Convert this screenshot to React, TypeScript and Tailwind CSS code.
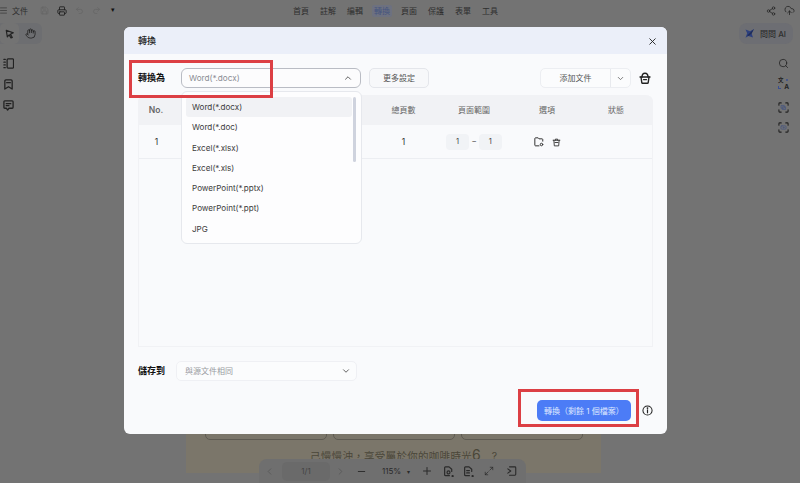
import React from "react";
import { Menu, Save, Printer, Undo2, Redo2, Hand, Search, X, ChevronUp, ChevronDown, ChevronLeft, ChevronRight, Minus, Plus, Share2, CloudUpload, Maximize2 } from "lucide-react";

const tabs = ["首頁", "註解", "編輯", "轉換", "頁面", "保護", "表單", "工具"];
const formats = ["Word(*.docx)", "Word(*.doc)", "Excel(*.xlsx)", "Excel(*.xls)", "PowerPoint(*.pptx)", "PowerPoint(*.ppt)", "JPG"];

type P = { size?: number; className?: string };
const S = ({ size = 12, className, children, sw = 1.4 }: P & { children: React.ReactNode; sw?: number }) => (
  <svg width={size} height={size} viewBox="0 0 12 12" fill="none" stroke="currentColor" strokeWidth={sw} strokeLinecap="round" strokeLinejoin="round" className={className}>{children}</svg>
);
const Cursor = (p: P) => <S {...p}><path d="M1.5 1.5 L10 4.6 L6.4 6.2 L8.8 10.2 L7.2 10.8 L5 7 L2.8 9.4 Z" /></S>;
const PanelIcon = (p: P) => <S {...p}><rect x="4.5" y="1" width="7" height="10" rx="1" /><path d="M1 1.5h1.5M1 4.5h1.5M1 7.5h1.5M1 10.5h1.5" /></S>;
const BookmarkIcon = (p: P) => <S {...p}><path d="M2 2.2Q2 1 3.2 1h5.6Q10 1 10 2.2V11L6 8.4 2 11Z" /><path d="M4 4h4" /></S>;
const CommentIcon = (p: P) => <S {...p}><path d="M1 2Q1 1 2 1h8q1 0 1 1v6q0 1-1 1H6.5L5 11 3.8 9H2Q1 9 1 8Z" /><path d="M3.5 4h5M3.5 6.2h3" /></S>;
const Basket = (p: P) => <S {...p}><path d="M1 5h10" /><path d="M3 5Q3 1.2 6 1.2T9 5" /><path d="M2 5l.8 5.6q.1.7.8.7h4.8q.7 0 .8-.7L10 5" /><path d="M4.5 7.6h3" /></S>;
const Bin = (p: P) => <S {...p} sw={1.2}><path d="M1.5 3h9M4.5 3V1.5h3V3" /><path d="M2.5 3l.6 7.5h5.8L9.5 3" /><path d="M4 6h4" /></S>;
const FolderGear = (p: P) => <S {...p} sw={1.2}><path d="M10.5 5V3q0-.8-.8-.8H6L5 1H1.8Q1 1 1 1.8v8q0 .8.8.8H6" /><circle cx="9" cy="9" r="1.5" /></S>;
const Translate = ({ className }: P) => (
  <div className={"relative w-[11px] h-[12px] leading-none font-bold text-[#222] " + (className ?? "")}>
    <span className="absolute left-0 top-0 text-[5.5px]">文</span>
    <span className="absolute right-0 bottom-0 text-[6.5px]">A</span>
    <span className="absolute right-[1px] top-[1px] w-[2px] h-[2px] rounded-full bg-[#3b4f8f]" />
    <span className="absolute left-0 bottom-[1px] w-[3px] h-[3px] border-l border-b border-[#3b4f8f]" />
  </div>
);
const Brackets = () => <path d="M1 3.5V1.8Q1 1 1.8 1h1.7M8.5 1h1.7q.8 0 .8.8v1.7M11 8.5v1.7q0 .8-.8.8H8.5M3.5 11H1.8Q1 11 1 10.2V8.5" />;
const ScanA = (p: P) => <S {...p} sw={1.2}><Brackets /><rect x="3.8" y="3.8" width="3" height="3" stroke="#46557f" strokeWidth={0.8} /><rect x="5.2" y="5.2" width="3" height="3" stroke="#46557f" strokeWidth={0.8} /></S>;
const ScanB = (p: P) => <S {...p} sw={1.2}><Brackets /><rect x="3.2" y="4.2" width="5.6" height="3.6" rx="1" stroke="#46557f" strokeWidth={0.8} /><circle cx="6" cy="6" r=".6" stroke="#46557f" strokeWidth={0.7} /></S>;
const DocA = (p: P) => <S {...p} sw={1.3}><path d="M7 10.5H2.6q-.8 0-.8-.8V1.8q0-.8.8-.8h4L9.5 3.5V6" /><circle cx="6" cy="7" r="1.6" /><circle cx="10.5" cy="11" r=".6" fill="currentColor" /></S>;
const DocB = (p: P) => <S {...p} sw={1.3}><path d="M7 10.5H2.6q-.8 0-.8-.8V1.8q0-.8.8-.8h4L9.5 3.5V6" /><path d="M4 5h3M4 7.5h3" /><circle cx="10.5" cy="11" r=".6" fill="currentColor" /></S>;
const ExitIcon = (p: P) => <S {...p} sw={1.3}><path d="M3 1h6.5q1 0 1 1v8q0 1-1 1H3" /><path d="M1 3.5L4.5 6 1 8.5" /></S>;
const InfoIcon = (p: P) => <S {...p} sw={1.1}><circle cx="6" cy="6" r="5" /><path d="M6 5.3v3.2" strokeWidth={1.3} /><circle cx="6" cy="3.4" r=".4" fill="currentColor" /></S>;
const AiMark = () => (
  <svg width="9" height="9" viewBox="0 0 9 9" className="shrink-0"><path d="M0.5 0.5L5 2.2 9 0 6.6 4.5 8 8.5 3.5 7 0.5 8.8 2.2 4.3Z" fill="#2c3f7d" /><path d="M9 0L2.2 6.4 3.5 7 6.6 4.5Z" fill="#1f2c58" /></svg>
);

export default function App() {
  return (
    <div style={{ fontFamily: '"Inter","Noto Sans CJK TC",sans-serif' }} className="relative w-[800px] h-[483px] overflow-hidden bg-[#737373] text-[#333]">
      {/* top bar */}
      <div className="flex items-center h-[21px] pr-[5px] text-[8px] text-[#2e2e2e]">
        <Menu size={9} strokeWidth={1.6} className="ml-[-1px]" />
        <span className="ml-[4px]">文件</span>
        <div className="flex items-center gap-[8px] ml-[12px]">
          <Save size={9} className="text-[#666]" />
          <Printer size={10} strokeWidth={2.2} className="text-[#222]" />
          <Undo2 size={9} className="text-[#666]" />
          <Redo2 size={9} className="text-[#666]" />
          <span className="ml-[2px] text-[7px] text-[#111]">▾</span>
        </div>
        <div className="flex items-center gap-[7px] ml-[176px]">
          {tabs.map((t) => (
            <span key={t} className={t === "轉換" ? "px-[2px] rounded-[2px] text-[#46557f] bg-[#6d7180]" : "px-[2px]"}>{t}</span>
          ))}
        </div>
        <div className="flex items-center gap-[8px] ml-auto">
          <Share2 size={10} strokeWidth={1.7} className="text-[#222]" />
          <CloudUpload size={11} strokeWidth={1.7} className="text-[#222]" />
        </div>
      </div>
      {/* second row */}
      <div className="flex justify-between items-start h-[25px] mt-[2px]">
        <div className="flex h-[21px] w-[42px] rounded-r-[6px] bg-[#6d6e71] items-center">
          <div className="flex items-center justify-center w-[19px] h-[21px] bg-[#737373] rounded-[5px]"><Cursor size={10} className="text-[#222] ml-[1px]" /></div>
          <Hand size={11} strokeWidth={1.8} className="text-[#222] ml-[6px]" />
        </div>
        <div className="flex items-center gap-[6px] h-[21px] w-[54px] rounded-[8px] bg-[#6d6e73] pl-[6px] mr-[7px] text-[8px] font-medium text-[#2e2e2e]">
          <AiMark />
          <span>問問 AI</span>
        </div>
      </div>
      {/* side rails */}
      <div className="absolute left-[3px] top-[58px] flex flex-col gap-[10px] text-[#222]">
        <PanelIcon size={11} />
        <BookmarkIcon size={11} />
        <CommentIcon size={11} />
      </div>
      <div className="absolute right-[11px] top-[58px] flex flex-col text-[#222]">
        <Search size={11} strokeWidth={1.7} />
        <Translate className="mt-[9px]" />
        <ScanA size={11} className="mt-[12px]" />
        <ScanB size={11} className="mt-[9px]" />
      </div>

      {/* document peeking beneath */}
      <div className="absolute left-[186px] top-[425px] w-[415px] h-[48px] bg-[#7b766a]">
        <div className="flex gap-[6px] pl-[19px]">
          <div className="w-[122px] h-[15px] border border-[#5f5b53] rounded-b-[5px]" />
          <div className="w-[122px] h-[15px] border border-[#5f5b53] rounded-b-[5px]" />
          <div className="w-[122px] h-[15px] border border-[#5f5b53] rounded-b-[5px]" />
        </div>
        <div className="ml-[124px] mt-[4px] text-[10.5px] text-[#4a4639] whitespace-nowrap tracking-[0.3px]">己慢慢沖，享受屬於你的咖啡時光<span className="text-[14px]">6</span>　?</div>
      </div>
      {/* bottom toolbar */}
      <div className="absolute left-[259px] top-[459px] w-[267px] h-[24px] rounded-t-[8px] bg-[#6f6f6f] flex items-center text-[#2a2a2a] text-[8px]">
        <ChevronLeft size={11} className="ml-[5px] text-[#5a5a5a]" />
        <div className="ml-[7px] w-[48px] h-[19px] rounded-[5px] bg-[#6a6a6a] flex items-center justify-center text-[#444]">1/1</div>
        <ChevronRight size={11} className="ml-[5px] text-[#5a5a5a]" />
        <Minus size={11} className="ml-[10px]" />
        <span className="ml-[15px]">115%</span>
        <span className="ml-[6px] text-[6px]">▾</span>
        <Plus size={12} className="ml-[11px]" />
        <DocA size={11} className="ml-[10px]" />
        <DocB size={11} className="ml-[9px]" />
        <Maximize2 size={10} strokeWidth={1.7} className="ml-[10px]" />
        <ExitIcon size={10} className="ml-[13px]" />
      </div>

      {/* modal */}
      <div className="absolute left-[124px] top-[27px] w-[543px] h-[407px] rounded-[6px] overflow-hidden bg-[#f9fafc] flex flex-col text-[8px]">
        <div className="flex items-center justify-between h-[27px] shrink-0 bg-[#ebeff9] pl-[14px] pr-[9px] pt-[1px]">
          <span className="text-[9px] font-medium text-[#222]">轉換</span>
          <X size={11} strokeWidth={2} className="text-[#222]" />
        </div>
        <div className="flex items-center h-[20px] mt-[14px] px-[14px]">
          <span className="w-[43px] text-[9px] font-bold text-[#111]">轉換為</span>
          <div className="flex items-center justify-between w-[180px] h-[20px] rounded-[6px] border border-[#b9bcc4] bg-[#fcfcfd] pl-[7px] pr-[7px] text-[8.2px] text-[#8a8d94]">
            <span>Word(*.docx)</span>
            <ChevronUp size={10} className="text-[#444]" />
          </div>
          <div className="flex items-center justify-center ml-[8px] w-[60px] h-[20px] rounded-[5px] border border-[#e4e6eb] bg-[#f7f8fa] text-[#555]">更多設定</div>
          <div className="flex items-center ml-auto h-[20px] w-[91px] rounded-[5px] border border-[#eceef2] bg-[#fbfcfd] text-[#555]">
            <span className="w-[69px] text-center">添加文件</span>
            <span className="flex-1 flex h-full items-center justify-center border-l border-[#e8eaee]"><ChevronDown size={9} className="text-[#555]" /></span>
          </div>
          <Basket size={12} className="ml-[8px] mr-[2px] text-[#222]" />
        </div>
        {/* table */}
        <div className="mx-[14px] mt-[7px] h-[252px] rounded-t-[7px] border-b border-x border-[#f1f2f5]">
          <div className="flex items-center h-[30px] rounded-t-[7px] bg-[#f1f2f5] text-[#666] text-center mx-[-1px]">
            <span className="w-[36px] text-[8.5px] font-semibold">No.</span>
            <span className="w-[199px]"></span>
            <span className="w-[61px]">總頁數</span>
            <span className="w-[80px]">頁面範圍</span>
            <span className="w-[66px]">選項</span>
            <span className="w-[72px]">狀態</span>
          </div>
          <div className="flex items-center h-[34px] pt-[1px] border-b border-[#eceef2] text-center text-[8.5px] text-[#333]">
            <span className="w-[35px]">1</span>
            <span className="w-[199px]"></span>
            <span className="w-[61px]">1</span>
            <span className="w-[80px] flex items-center justify-center gap-[3px] text-[7.5px] text-[#444]">
              <span className="w-[23px] h-[16px] rounded-[4px] bg-[#f1f3f6] flex items-center justify-center">1</span>
              <span>–</span>
              <span className="w-[23px] h-[16px] rounded-[4px] bg-[#f1f3f6] flex items-center justify-center">1</span>
            </span>
            <span className="w-[66px] flex items-center justify-center gap-[8px] text-[#333]">
              <FolderGear size={10} />
              <Bin size={9} />
            </span>
          </div>
        </div>
        {/* save row */}
        <div className="flex items-center h-[20px] mt-[14px] px-[14px]">
          <span className="w-[38px] text-[9px] font-bold text-[#111]">儲存到</span>
          <div className="flex items-center justify-between w-[181px] h-[20px] rounded-[5px] border border-[#eff0f4] bg-[#fbfcfd] pl-[8px] pr-[5px] text-[#999ba1] text-[8px]">
            <span>與源文件相同</span>
            <ChevronDown size={10} className="text-[#444]" />
          </div>
        </div>
        {/* footer */}
        <div className="flex items-center justify-end mt-[19px] pr-[14px]">
          <div className="flex items-center justify-center w-[94px] h-[21px] rounded-[5px] bg-[#4c7cf6] text-[8px] text-[#dfe8ff]">轉換（剩餘 1 個檔案）</div>
          <InfoIcon size={11} className="ml-[11px] text-[#222]" />
        </div>
      </div>

      {/* dropdown */}
      <div className="absolute left-[181px] top-[91px] w-[181px] h-[153px] rounded-[6px] border border-[#e6e8ed] bg-[#fdfdfe] pt-[5px] px-[4px] text-[8.1px] text-[#3c3c3c]">
        {formats.map((f, i) => (
          <div key={f} className={"flex items-center h-[20px] w-[166px] pl-[6px] mb-[0.3px] rounded-[3px] " + (i === 0 ? "bg-[#f1f2f5]" : "")}>{f}</div>
        ))}
        <div className="absolute right-[5px] top-[5px] w-[3px] h-[65px] rounded-full bg-[#cfd3de]" />
      </div>

      {/* annotation boxes */}
      <div className="absolute left-[129px] top-[60px] w-[144px] h-[38px] border-[3px] border-[#dc3f44]" />
      <div className="absolute left-[518px] top-[389px] w-[121px] h-[38px] border-[3px] border-[#dc3f44]" />
    </div>
  );
}
